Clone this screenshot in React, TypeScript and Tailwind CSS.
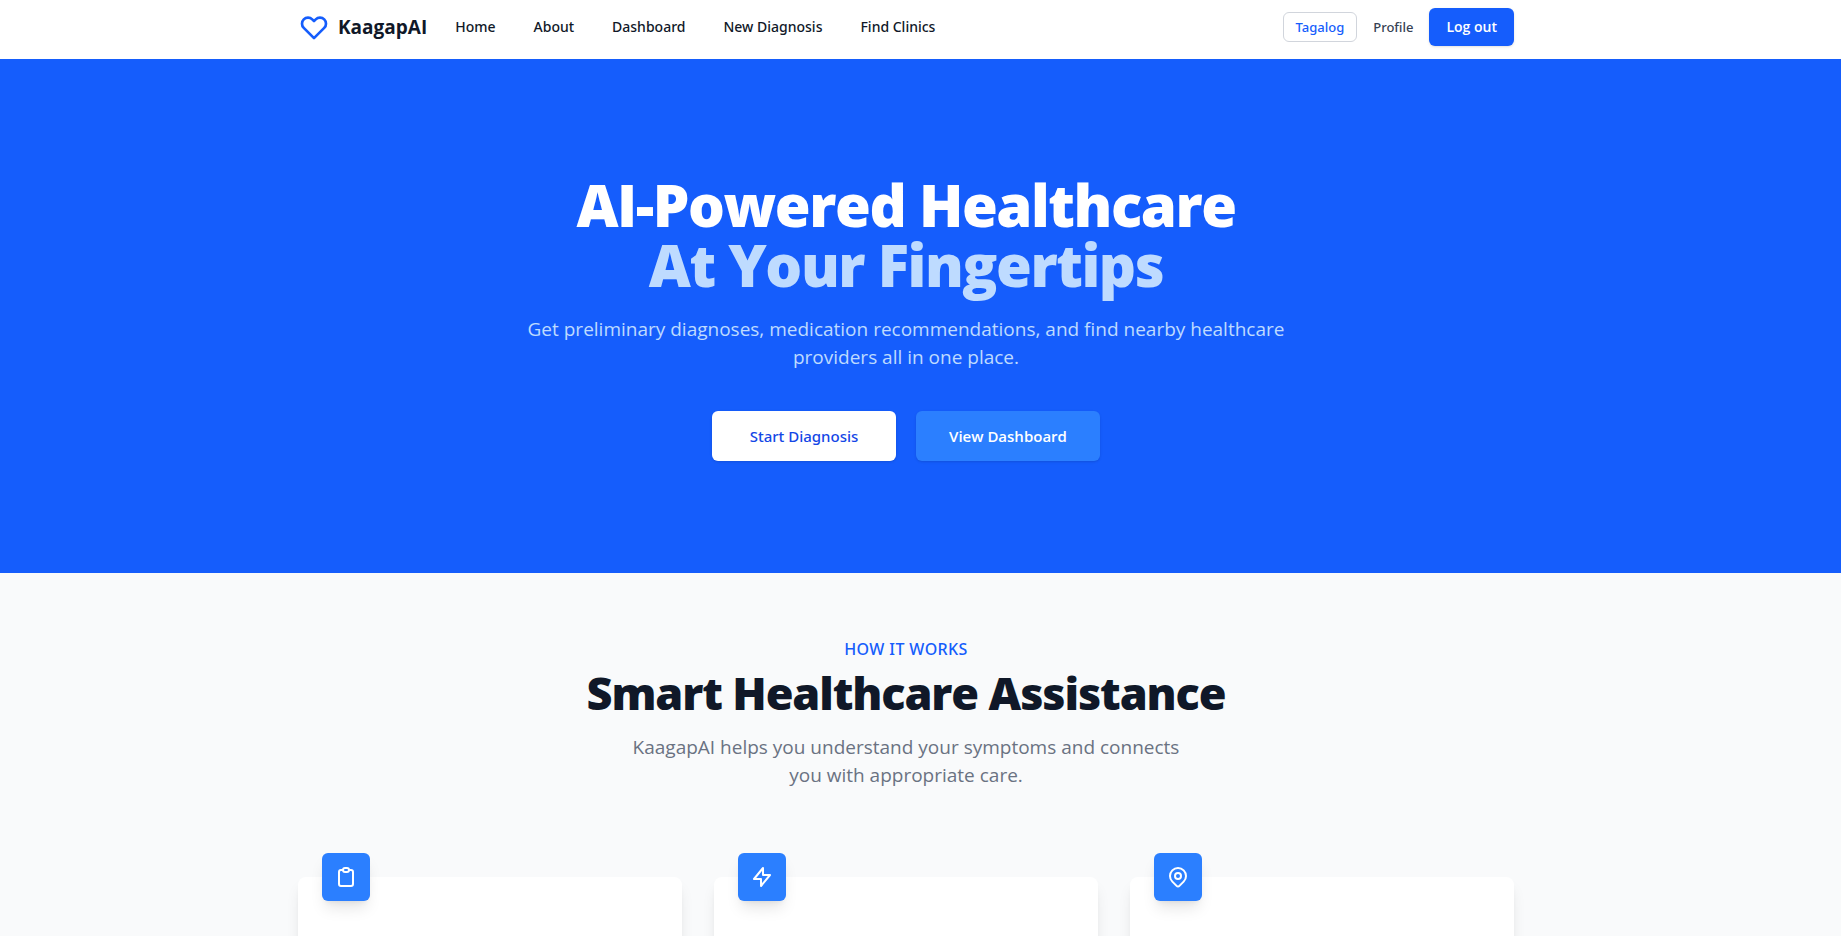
import React from "react";

const links = ["Home", "About", "Dashboard", "New Diagnosis", "Find Clinics"];

const heartPath =
  "M4.318 6.318a4.5 4.5 0 000 6.364L12 20.364l7.682-7.682a4.5 4.5 0 00-6.364-6.364L12 7.636l-1.318-1.318a4.5 4.5 0 00-6.364 0z";

const features = [
  {
    id: "clipboard",
    paths: [
      "M9 5H7a2 2 0 00-2 2v12a2 2 0 002 2h10a2 2 0 002-2V7a2 2 0 00-2-2h-2M9 5a2 2 0 002 2h2a2 2 0 002-2M9 5a2 2 0 012-2h2a2 2 0 012 2",
    ],
  },
  { id: "bolt", paths: ["M13 10V3L4 14h7v7l9-11h-7z"] },
  {
    id: "pin",
    paths: [
      "M17.657 16.657L13.414 20.9a1.998 1.998 0 01-2.827 0l-4.244-4.243a8 8 0 1111.314 0z",
      "M15 11a3 3 0 11-6 0 3 3 0 016 0z",
    ],
  },
];

function Icon({ paths, className }: { paths: string[]; className: string }) {
  return (
    <svg
      aria-hidden="true"
      className={className}
      fill="none"
      viewBox="0 0 24 24"
      stroke="currentColor"
      strokeWidth={2}
      strokeLinecap="round"
      strokeLinejoin="round"
    >
      {paths.map((d) => (
        <path key={d} d={d} />
      ))}
    </svg>
  );
}

function Header() {
  return (
    <header className="bg-white pr-[29px]">
      <div className="mx-auto flex max-w-7xl items-center justify-between px-8 pt-2 pb-[13px]">
        <div className="flex items-center">
          <a href="#" className="flex items-center gap-2 text-[19px] leading-7 font-bold text-gray-900">
            <Icon paths={[heartPath]} className="size-8 text-blue-600" />
            KaagapAI
          </a>
          <nav className="ml-7 flex gap-[38px] font-['Noto_Sans',sans-serif]">
            {links.map((label) => (
              <a key={label} href="#" className="text-sm font-medium text-gray-900">
                {label}
              </a>
            ))}
          </nav>
        </div>
        <div className="flex items-center gap-4 text-sm">
          <button className="rounded-md border border-gray-300 px-3 py-1 font-['Noto_Sans',sans-serif] text-[13px] leading-5 font-medium text-blue-600">
            Tagalog
          </button>
          <a href="#" className="font-['Noto_Sans',sans-serif] text-[13px] leading-5 font-medium text-gray-700">
            Profile
          </a>
          <button className="rounded-md border border-transparent bg-blue-600 px-4 py-2 font-semibold text-white shadow-sm">
            Log out
          </button>
        </div>
      </div>
    </header>
  );
}

function Hero() {
  return (
    <section className="bg-blue-600 pr-[29px]">
      <div className="mx-auto max-w-7xl px-8 pt-[116px] pb-28 text-center">
        <h1 className="text-[58px] leading-[60px] font-extrabold tracking-tight text-white">
          <span className="block">AI-Powered Healthcare</span>
          <span className="block text-blue-200">At Your Fingertips</span>
        </h1>
        <p className="mx-auto mt-5 max-w-3xl text-[19px] leading-7 text-blue-200">
          Get preliminary diagnoses, medication recommendations, and find nearby healthcare providers all in one place.
        </p>
        <div className="mt-10 flex justify-center gap-5 text-[15px] leading-6">
          <button className="w-46 rounded-md border border-transparent bg-white py-3 font-['Noto_Sans',sans-serif] font-medium text-blue-700 shadow-sm">
            Start Diagnosis
          </button>
          <button className="w-46 rounded-md border border-transparent bg-blue-500 py-3 font-semibold text-white shadow-sm">
            View Dashboard
          </button>
        </div>
      </div>
    </section>
  );
}

function HowItWorks() {
  return (
    <section className="grow bg-gray-50 pr-[29px]">
      <div className="mx-auto max-w-7xl px-8 py-16 text-center">
        <p className="font-['Noto_Sans',sans-serif] text-base font-medium tracking-wide text-blue-600 uppercase">
          How it works
        </p>
        <h2 className="mt-2 text-[45px] leading-[48px] font-extrabold tracking-tight text-gray-900">
          Smart Healthcare Assistance
        </h2>
        <p className="mx-auto mt-4 max-w-xl text-[19px] leading-7 text-gray-500">
          KaagapAI helps you understand your symptoms and connects you with appropriate care.
        </p>
        <div className="mt-22 grid grid-cols-3 gap-8">
          {features.map(({ id, paths }) => (
            <div key={id} className="min-h-48 rounded-lg bg-white px-6 shadow-lg">
              <div className="-mt-6 flex size-12 items-center justify-center rounded-md bg-blue-500 text-white shadow-lg">
                <Icon paths={paths} className="size-6" />
              </div>
            </div>
          ))}
        </div>
      </div>
    </section>
  );
}

export default function App() {
  return (
    <div className="flex min-h-screen flex-col bg-white font-['Open_Sans','Noto_Sans',sans-serif]">
      <Header />
      <main className="flex grow flex-col">
        <Hero />
        <HowItWorks />
      </main>
    </div>
  );
}
